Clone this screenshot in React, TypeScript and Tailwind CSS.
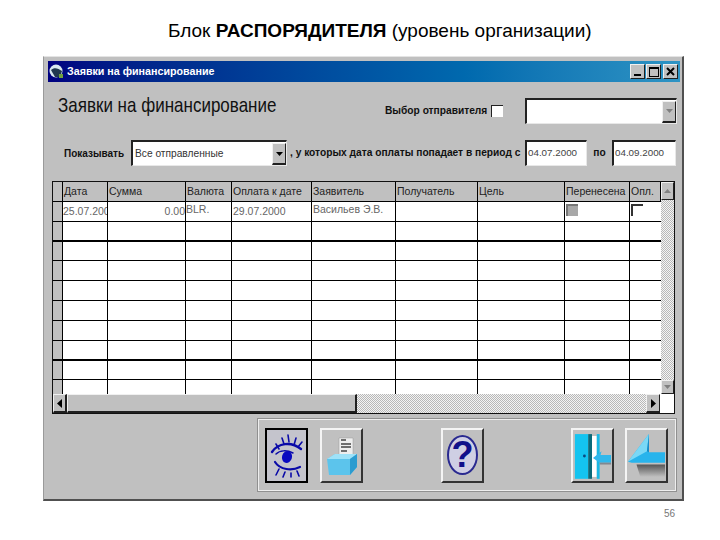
import React from "react";

const hatch = "bg-[repeating-conic-gradient(#b8b8b8_0_25%,#f4f4f4_0_50%)] bg-[length:2px_2px]";
const raised = "bg-[#c0c0c0] border-t border-l border-t-[#f0f0f0] border-l-[#f0f0f0] border-r border-b border-r-[#202020] border-b-[#202020]";
const sunken = "bg-white border-t-2 border-l-2 border-t-[#222] border-l-[#222] border-r border-b border-r-[#e8e8e8] border-b-[#e8e8e8]";

const cols = "grid grid-cols-[10px_45px_78px_46px_80px_84px_82px_87px_65px_31px]";
const headers = ["", "Дата", "Сумма", "Валюта", "Оплата к дате", "Заявитель", "Получатель", "Цель", "Перенесена", "Опл."];
const rows: { h: string; line: string }[] = [
  { h: "h-[20px]", line: "border-b border-b-black" },
  { h: "h-[20px]", line: "border-b-2 border-b-black" },
  { h: "h-[19px]", line: "border-b border-b-black" },
  { h: "h-[20px]", line: "border-b border-b-black" },
  { h: "h-[20px]", line: "border-b border-b-black" },
  { h: "h-[20px]", line: "border-b border-b-black" },
  { h: "h-[20px]", line: "border-b border-b-black" },
  { h: "h-[20px]", line: "border-b-2 border-b-black" },
  { h: "h-[19px]", line: "border-b border-b-black" },
  { h: "h-[14px]", line: "" },
];

function ArrowDown({ color = "#000" }: { color?: string }) {
  return (
    <svg width="9" height="6" viewBox="0 0 9 6">
      <path d="M1 1h7L4.500 5z" fill={color} />
    </svg>
  );
}

function Combo({ w, text, disabled }: { w: string; text?: string; disabled?: boolean }) {
  return (
    <div className={`${w} h-[26px] ${sunken} flex items-stretch`}>
      <div className="flex-1 pl-[2px] flex items-center text-[10.200px] text-[#333]">{text}</div>
      <div className={`w-[14px] mt-[1px] flex items-center justify-center ${raised} border-b-2`}>
        <ArrowDown color={disabled ? "#808080" : "#000"} />
      </div>
    </div>
  );
}

function DateBox({ w, v }: { w: string; v: string }) {
  return (
    <div className={`${w} h-[26px] ${sunken} flex items-center pl-[1px] text-[9.800px] text-[#444]`}>{v}</div>
  );
}

function Check({ gray }: { gray?: boolean }) {
  return (
    <div className={`w-[12px] h-[12px] border-t-2 border-l-2 border-t-[#333] border-l-[#333] ${gray ? "bg-[#a8a8a8] border-t-[#777] border-l-[#777]" : "bg-white"}`} />
  );
}

function ToolBtn({ pressed, extra, children }: { pressed?: boolean; extra?: string; children: React.ReactNode }) {
  return (
    <div
      className={`w-[43px] h-[55px] flex items-center justify-center shrink-0 ${
        pressed
          ? "bg-[#c4c4cc] border-2 border-black"
          : "bg-[#c0c0c0] border-t-2 border-l-2 border-t-[#f4f4f4] border-l-[#f4f4f4] border-r-2 border-b-2 border-r-[#333] border-b-[#333]"
      } ${extra ?? ""}`}
    >
      {children}
    </div>
  );
}

function EyeIcon() {
  return (
    <svg width="36" height="46" viewBox="0 0 36 46" fill="none" stroke="#0a0aa8" strokeLinecap="round">
      <path d="M3 20C9 11 22 9 32 17" strokeWidth="2.400" />
      <path d="M7 22C11 18 18 18 24 21" strokeWidth="1.500" />
      <path d="M6 30C11 38 23 39 31 35" strokeWidth="2.200" />
      <ellipse cx="18" cy="25" rx="5" ry="6" fill="#0a0ac0" stroke="none" transform="rotate(15 18 25)" />
      <path d="M7 12l3 5M13 6l2 6M19 3l1 7M27 6l-2 7M33 10l-4 5M10 37l-3 6M16 40l-2 5M22 41l0 4M28 39l2 5" strokeWidth="1.600" />
    </svg>
  );
}

function PrinterIcon() {
  return (
    <svg width="36" height="46" viewBox="0 0 36 46">
      <path d="M15 6h14v19H15z" fill="#eee" stroke="#999" strokeWidth="0.500" />
      <path d="M17 8h5M17 12h10M17 15h10M17 19h6" stroke="#444" strokeWidth="1.500" />
      <path d="M3 27l8-5h22v13l-7 8H5z" fill="#5cc4ec" />
      <path d="M3 27h23l7-5H11z" fill="#9fe2f8" />
      <path d="M26 27v16l7-8V22z" fill="#2c9cd0" />
    </svg>
  );
}

function HelpIcon() {
  return (
    <div className="w-[31px] h-[40px] rounded-[50%] border-2 border-[#2a2a90] bg-[#cfcfe4] flex items-center justify-center text-[#10108a] text-[36px] leading-none font-bold">
      ?
    </div>
  );
}

function DoorIcon() {
  return (
    <svg width="41" height="53" viewBox="0 0 41 53">
      <path d="M2 4h14v47H2z" fill="#14c4f0" />
      <path d="M16 4h4v47h-4z" fill="#0a6a7a" />
      <path d="M20 6h5v43h-5z" fill="#fff" />
      <path d="M25 4h3v47h-3z" fill="#18b8e4" />
      <circle cx="12" cy="27" r="1.500" fill="#0a4a80" />
      <path d="M21 29l9-7-1 4h11v8H28z" fill="#30b8ec" />
      <path d="M28 35h12" stroke="#808890" strokeWidth="2" />
    </svg>
  );
}

function ArrowIcon() {
  return (
    <svg width="41" height="53" viewBox="0 0 41 53">
      <defs>
        <linearGradient id="sh" x1="0" y1="0" x2="0" y2="1">
          <stop offset="0" stopColor="#555" />
          <stop offset="1" stopColor="#c0c0c0" />
        </linearGradient>
      </defs>
      <path d="M10 36h30v13H14z" fill="url(#sh)" />
      <path d="M1 33L23 4v19h17v11H5z" fill="#28b4ec" />
      <path d="M1 33L23 4 21 22z" fill="#7ad8f6" />
      <path d="M21 22l2-18v19z" fill="#1488c4" />
    </svg>
  );
}

export default function App() {
  return (
    <div className="w-[720px] h-[540px] bg-white overflow-hidden font-['Liberation_Sans',Arial,sans-serif] text-black flex flex-col">
      <div className="pl-[168px] pt-[20px] h-[56px] text-[19px] leading-[22px] whitespace-nowrap shrink-0">
        Блок <b>РАСПОРЯДИТЕЛЯ</b> (уровень организации)
      </div>

      <div className="ml-[43px] w-[641px] h-[445px] shrink-0 bg-[#c0c0c0] border-t border-l border-t-[#e4e4e4] border-l-[#9a9a9a] border-r-2 border-b-2 border-r-[#505050] border-b-[#505050] pt-[4px] pl-[4px]">
        {/* title bar */}
        <div className="w-[632px] h-[21px] bg-gradient-to-r from-[#000080] to-[#2e94c4] flex items-center pl-[1px] pr-[2px]">
          <svg width="15" height="15" viewBox="0 0 15 15" className="shrink-0">
            <circle cx="7" cy="7" r="6.500" fill="#d8e8f0" />
            <path d="M2 6C5 3 9 4 13 7L11 13 6 13z" fill="#203850" />
            <path d="M10 10h4v4h-4z" fill="#70a040" />
          </svg>
          <span className="ml-[3px] text-[10.700px] font-bold text-white whitespace-nowrap">Заявки на финансирование</span>
          <div className="ml-auto flex gap-[1px]">
            <div className={`w-[15px] h-[15px] ${raised} flex items-end pl-[3px] pb-[2px]`}>
              <div className="w-[7px] h-[2px] bg-black" />
            </div>
            <div className={`w-[15px] h-[15px] ${raised} flex items-center justify-center`}>
              <div className="w-[10px] h-[10px] border border-black border-t-2" />
            </div>
            <div className={`w-[15px] h-[15px] ${raised} ml-[1px] flex items-center justify-center`}>
              <svg width="9" height="9" viewBox="0 0 9 9"><path d="M1 1l7 7M8 1L1 8" stroke="#000" strokeWidth="2" /></svg>
            </div>
          </div>
        </div>

        {/* heading row */}
        <div className="flex items-start pl-[10px] mt-[13px] h-[28px]">
          <div className="w-[327px] text-[17px] leading-[22px] text-[#111] whitespace-nowrap origin-left scale-y-[1.15]">Заявки на финансирование</div>
          <div className="flex items-center mt-[3px] h-[25px]">
            <span className="w-[106px] text-[10.200px] font-bold text-[#111] whitespace-nowrap">Выбор отправителя</span>
            <div className="w-[12px] h-[12px] bg-white border-t border-l border-t-[#222] border-l-[#222]" />
            <div className="w-[22px]" />
            <Combo w="w-[152px]" disabled />
          </div>
        </div>

        {/* filter row */}
        <div className="flex items-center mt-[17px] h-[26px] pl-[16px] text-[10.200px] font-bold text-[#111] whitespace-nowrap">
          <span className="w-[67px] text-[10px]">Показывать</span>
          <div className="font-normal"><Combo w="w-[156px]" text="Все отправленные" /></div>
          <span className="w-[238px] pl-[3px]">, у которых дата оплаты попадает в период с</span>
          <div className="font-normal"><DateBox w="w-[62px]" v="04.07.2000" /></div>
          <span className="w-[25px] text-center">по</span>
          <div className="font-normal"><DateBox w="w-[64px]" v="04.09.2000" /></div>
        </div>

        {/* table */}
        <div className="ml-[4px] mt-[15px] w-[623px] h-[233px] border border-[#111] flex flex-col">
          <div className="flex flex-1 min-h-0">
            <div className="w-[608px]">
              <div className={`${cols} h-[20px] bg-[#c0c0c0] border-b border-b-black text-[10.500px] text-[#222]`}>
                {headers.map((t, i) => (
                  <div key={i} className="border-r border-r-black pl-[1px] leading-[18px] whitespace-nowrap overflow-hidden">{t}</div>
                ))}
              </div>
              {rows.map((r, i) => (
                <div key={i} className={`${cols} ${r.h} ${r.line} bg-white text-[10.500px] text-[#666]`}>
                  <div className="bg-[#c0c0c0] border-r border-r-black" />
                  <div className="border-r border-r-black overflow-hidden whitespace-nowrap leading-[18px]">{i === 0 ? "25.07.2000" : ""}</div>
                  <div className="border-r border-r-black text-right leading-[18px]">{i === 0 ? "0.00" : ""}</div>
                  <div className="border-r border-r-black leading-[14px]">{i === 0 ? "BLR." : ""}</div>
                  <div className="border-r border-r-black leading-[18px] pl-[1px]">{i === 0 ? "29.07.2000" : ""}</div>
                  <div className="border-r border-r-black leading-[14px] pl-[1px] whitespace-nowrap">{i === 0 ? "Васильев Э.В." : ""}</div>
                  <div className="border-r border-r-black" />
                  <div className="border-r border-r-black" />
                  <div className="border-r border-r-black pl-[1px] pt-[2px]">{i === 0 && <Check gray />}</div>
                  <div className="pt-[2px] pl-[1px]">{i === 0 && <Check />}</div>
                </div>
              ))}
            </div>
            {/* vertical scrollbar */}
            <div className={`w-[14px] flex flex-col ${hatch}`}>
              <div className={`h-[18px] ${raised} flex items-center justify-center`}>
                <div className="rotate-180 flex"><ArrowDown color="#808080" /></div>
              </div>
              <div className="flex-1" />
              <div className={`h-[14px] ${raised} flex items-center justify-center`}>
                <ArrowDown color="#808080" />
              </div>
            </div>
          </div>
          {/* horizontal scrollbar */}
          <div className="flex h-[19px] shrink-0">
            <div className={`w-[14px] ${raised} flex items-center justify-center border-r-2 border-b-2`}>
              <svg width="5" height="9" viewBox="0 0 5 9"><path d="M5 0v9L0 4.500z" fill="#000" /></svg>
            </div>
            <div className={`w-[290px] ${raised} border-b-2 border-r-2`} />
            <div className={`flex-1 ${hatch}`} />
            <div className={`w-[14px] ${raised} flex items-center justify-center border-b-2`}>
              <svg width="5" height="9" viewBox="0 0 5 9"><path d="M0 0v9l5-4.500z" fill="#000" /></svg>
            </div>
            <div className="w-[14px] bg-white" />
          </div>
        </div>

        {/* toolbar */}
        <div className="ml-[210px] mt-[5px] w-[418px] h-[72px] border border-[#eeeeee] outline outline-1 outline-[#909090] flex items-center pl-[6px]">
          <ToolBtn pressed><EyeIcon /></ToolBtn>
          <ToolBtn extra="ml-[12px]"><PrinterIcon /></ToolBtn>
          <ToolBtn extra="ml-[78px]"><HelpIcon /></ToolBtn>
          <ToolBtn extra="ml-[87px]"><DoorIcon /></ToolBtn>
          <ToolBtn extra="ml-[11px]"><ArrowIcon /></ToolBtn>
        </div>
      </div>

      <div className="mt-[7px] pl-[664px] text-[10px] leading-[12px] text-[#777]">56</div>
    </div>
  );
}
